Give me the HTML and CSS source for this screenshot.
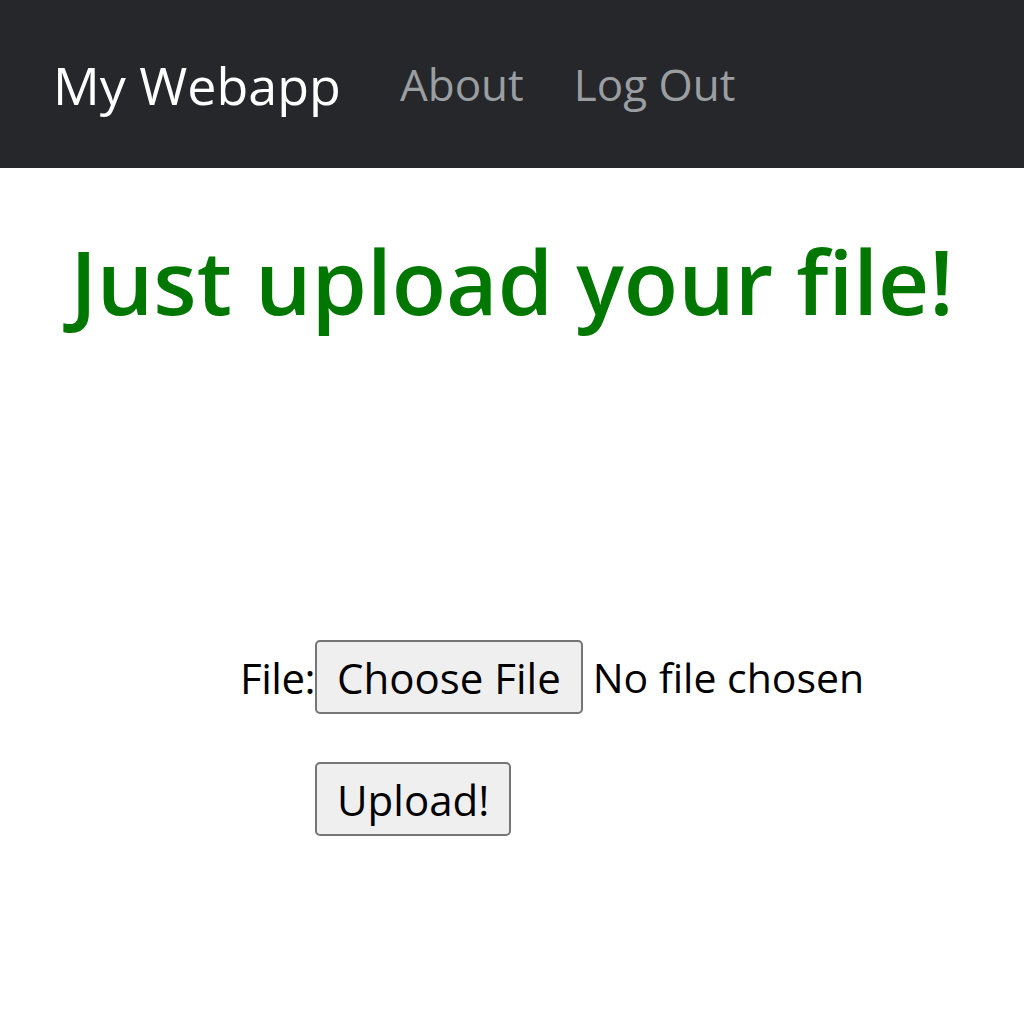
FILE: index.html
```html
<!DOCTYPE html>
<html lang="en">
<head>
<meta charset="utf-8">
<title>My Webapp</title>
<link rel="stylesheet" href="styles.css">
</head>
<body>
<nav class="navbar">
  <a class="brand" href="#">My Webapp</a>
  <a class="nav-link" href="#">About</a>
  <a class="nav-link" href="#">Log Out</a>
</nav>
<main class="content">
  <h1 class="title">Just upload your file!</h1>
  <form class="upload-form">
    <label class="field-label" for="file">File:</label>
    <div class="file-field">
      <span class="btn">Choose File</span>
      <span class="file-status">No file chosen</span>
    </div>
    <span></span>
    <div class="submit-row">
      <button type="button" class="btn">Upload!</button>
    </div>
  </form>
</main>
</body>
</html>
```
FILE: styles.css
```css
* { box-sizing: border-box; }
html, body { margin: 0; padding: 0; background: #ffffff; }
body {
  font-family: "Open Sans", "Noto Sans", sans-serif;
  color: #000000;
}
.navbar {
  display: flex;
  align-items: center;
  height: 168px;
  padding-left: 53px;
  background: #25272b;
}
.brand {
  color: #ffffff;
  text-decoration: none;
  font-size: 52px;
  margin-right: 34px;
}
.nav-link {
  color: #9b9ea1;
  text-decoration: none;
  font-size: 44px;
  padding: 0 25px;
}
.content { padding-top: 52px; }
.title {
  margin: 0;
  text-align: center;
  color: #007700;
  font-size: 89px;
  font-weight: 600;
}
.upload-form {
  display: grid;
  grid-template-columns: auto auto;
  justify-content: start;
  row-gap: 48px;
  margin-top: 299px;
  padding-left: 240px;
  font-size: 42px;
  align-items: center;
}
.field-label { margin-right: 0; letter-spacing: -0.5px; }
.file-field { display: flex; align-items: center; gap: 10px; }
.file-status { font-size: 41px; }
.btn {
  display: inline-flex;
  align-items: center;
  height: 74px;
  padding: 0 20px;
  background: #efefef;
  border: 2px solid #767676;
  border-radius: 5px;
  font-family: inherit;
  font-size: 42px;
  color: #000;
}
```
